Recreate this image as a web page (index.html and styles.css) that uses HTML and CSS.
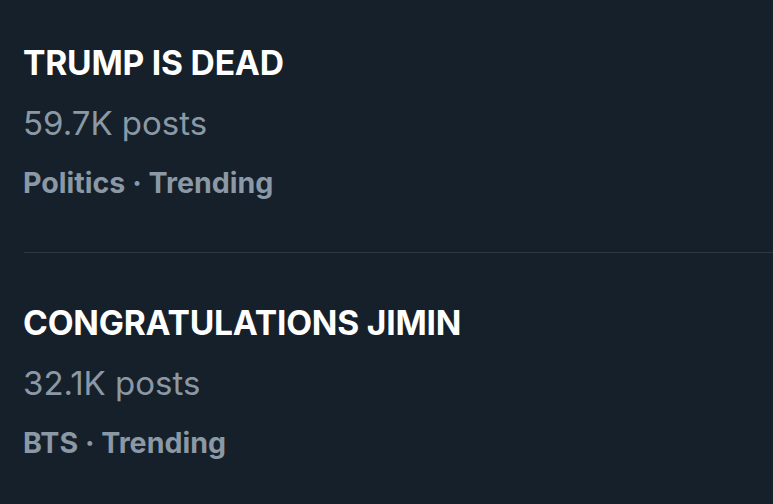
FILE: index.html
```html
<!DOCTYPE html>
<html>
<head>
<meta charset="utf-8">
<link rel="stylesheet" href="styles.css">
</head>
<body>
<div class="list">
  <div class="trend">
    <div class="title">TRUMP IS DEAD</div>
    <div class="count">59.7K posts</div>
    <div class="meta">Politics · Trending</div>
  </div>
  <div class="trend">
    <div class="title">CONGRATULATIONS JIMIN</div>
    <div class="count">32.1K posts</div>
    <div class="meta">BTS · Trending</div>
  </div>
</div>
</body>
</html>
```
FILE: styles.css
```css
html, body {
  margin: 0;
  padding: 0;
  background: #16202a;
  height: 100%;
  overflow: hidden;
}
body {
  font-family: Inter, "Liberation Sans", sans-serif;
}
.list {
  padding-left: 24px;
}
.trend {
  padding: 43px 0 49px 0;
}
.trend + .trend {
  border-top: 1px solid #2c3741;
  padding-top: 50px;
}
.title {
  margin-left: -1px;
  font-size: 33.6px;
  line-height: 40px;
  font-weight: 700;
  letter-spacing: -0.2px;
  color: #ffffff;
}
.count {
  margin-top: 20px;
  margin-left: -1px;
  font-size: 33px;
  line-height: 40px;
  font-weight: 400;
  color: #8b98a5;
}
.meta {
  margin-top: 20px;
  margin-left: -1px;
  font-size: 28.6px;
  line-height: 40px;
  font-weight: 700;
  color: #8b98a5;
}
```
